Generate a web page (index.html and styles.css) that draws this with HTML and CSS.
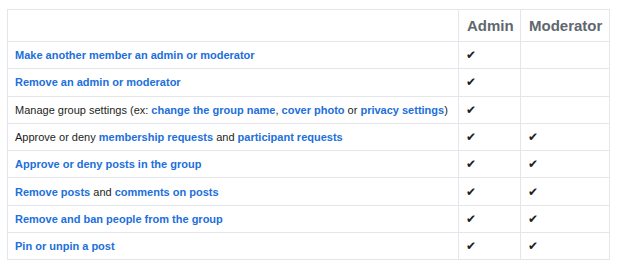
FILE: index.html
```html
<!DOCTYPE html>
<html lang="en">
<head>
    <meta charset="UTF-8">
    <title>Group roles</title>
    <link rel="stylesheet" href="styles.css">
</head>
<body>
    <table class="roles-table">
        <thead>
            <tr>
                <th class="task-col"></th>
                <th class="role-col admin-col">Admin</th>
                <th class="role-col mod-col">Moderator</th>
            </tr>
        </thead>
        <tbody>
            <tr>
                <td><a href="#">Make another member an admin or moderator</a></td>
                <td class="check">&#10004;</td>
                <td class="check"></td>
            </tr>
            <tr>
                <td><a href="#">Remove an admin or moderator</a></td>
                <td class="check">&#10004;</td>
                <td class="check"></td>
            </tr>
            <tr>
                <td>Manage group settings (ex: <a href="#">change the group name</a>, <a href="#">cover photo</a> or <a href="#">privacy settings</a>)</td>
                <td class="check">&#10004;</td>
                <td class="check"></td>
            </tr>
            <tr>
                <td>Approve or deny <a href="#">membership requests</a> and <a href="#">participant requests</a></td>
                <td class="check">&#10004;</td>
                <td class="check">&#10004;</td>
            </tr>
            <tr>
                <td><a href="#">Approve or deny posts in the group</a></td>
                <td class="check">&#10004;</td>
                <td class="check">&#10004;</td>
            </tr>
            <tr>
                <td><a href="#">Remove posts</a> and <a href="#">comments on posts</a></td>
                <td class="check">&#10004;</td>
                <td class="check">&#10004;</td>
            </tr>
            <tr>
                <td><a href="#">Remove and ban people from the group</a></td>
                <td class="check">&#10004;</td>
                <td class="check">&#10004;</td>
            </tr>
            <tr>
                <td><a href="#">Pin or unpin a post</a></td>
                <td class="check">&#10004;</td>
                <td class="check">&#10004;</td>
            </tr>
        </tbody>
    </table>
</body>
</html>
```

FILE: styles.css
```css
body {
    margin: 0;
    padding: 9px 10px 0 7px;
    background-color: white;
    font-family: 'Liberation Sans', Arial, sans-serif;
    color: #1c1e21;
}

/* Roles table */
.roles-table {
    border-collapse: collapse;
    width: 603px;
    table-layout: fixed;
}

.roles-table th,
.roles-table td {
    border: 1px solid #e4e6eb;
    padding: 0 0 0 8px;
    text-align: left;
    white-space: nowrap;
}

.roles-table th {
    height: 31px;
    font-size: 15px;
    font-weight: bold;
    color: #606770;
    padding-top: 0;
}

.task-col {
    width: 442px;
}

.admin-col {
    width: 53px;
}

.roles-table td {
    height: 26.3px;
    font-size: 11px;
    line-height: 16px;
}

.roles-table td:first-child {
    padding-left: 7px;
}

.roles-table a {
    color: #216fdb;
    font-weight: bold;
    text-decoration: none;
}

.roles-table .check {
    font-size: 12px;
    color: #1c1e21;
    padding-left: 7px;
}
```
